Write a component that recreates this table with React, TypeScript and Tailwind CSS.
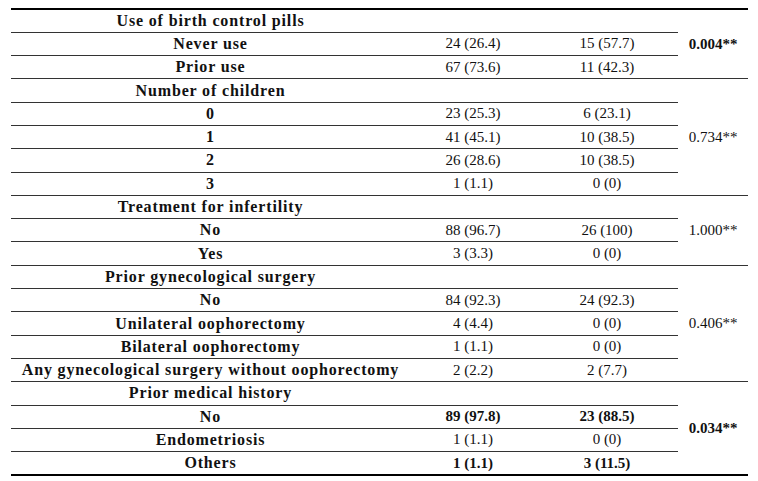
import React from "react";

type Row = { label: string; a?: string; b?: string; bold?: boolean };
type Group = { title: string; p: string; pBold?: boolean; rows: Row[] };

const groups: Group[] = [
  {
    title: "Use of birth control pills",
    p: "0.004**",
    pBold: true,
    rows: [
      { label: "Never use", a: "24 (26.4)", b: "15 (57.7)" },
      { label: "Prior use", a: "67 (73.6)", b: "11 (42.3)" },
    ],
  },
  {
    title: "Number of children",
    p: "0.734**",
    rows: [
      { label: "0", a: "23 (25.3)", b: "6 (23.1)" },
      { label: "1", a: "41 (45.1)", b: "10 (38.5)" },
      { label: "2", a: "26 (28.6)", b: "10 (38.5)" },
      { label: "3", a: "1 (1.1)", b: "0 (0)" },
    ],
  },
  {
    title: "Treatment for infertility",
    p: "1.000**",
    rows: [
      { label: "No", a: "88 (96.7)", b: "26 (100)" },
      { label: "Yes", a: "3 (3.3)", b: "0 (0)" },
    ],
  },
  {
    title: "Prior gynecological surgery",
    p: "0.406**",
    rows: [
      { label: "No", a: "84 (92.3)", b: "24 (92.3)" },
      { label: "Unilateral oophorectomy", a: "4 (4.4)", b: "0 (0)" },
      { label: "Bilateral oophorectomy", a: "1 (1.1)", b: "0 (0)" },
      { label: "Any gynecological surgery without oophorectomy", a: "2 (2.2)", b: "2 (7.7)" },
    ],
  },
  {
    title: "Prior medical history",
    p: "0.034**",
    pBold: true,
    rows: [
      { label: "No", a: "89 (97.8)", b: "23 (88.5)", bold: true },
      { label: "Endometriosis", a: "1 (1.1)", b: "0 (0)" },
      { label: "Others", a: "1 (1.1)", b: "3 (11.5)", bold: true },
    ],
  },
];

const cell = "h-[23.3px] p-0 text-center align-middle border-b border-[#333333]";
const label = "text-[16px] font-bold tracking-[0.85px]";

export default function App() {
  return (
    <div className="w-[758px] h-[481px] bg-white pt-2 pl-[11px] font-['Liberation_Serif',serif] text-[15px] leading-none text-[#111]">
      <table className="w-[737px] table-fixed border-collapse border-t-2 border-b-2 border-t-black border-b-black">
        <colgroup>
          <col className="w-[399px]" />
          <col className="w-[126px]" />
          <col className="w-[142px]" />
          <col className="w-[70px]" />
        </colgroup>
        <tbody>
          {groups.map((g, gi) => (
            <React.Fragment key={gi}>
              <tr>
                <td className={`${cell} ${label}`}>{g.title}</td>
                <td className={cell}></td>
                <td className={cell}></td>
                <td
                  rowSpan={g.rows.length + 1}
                  className={`p-0 text-center align-middle border-b border-[#333333] ${g.pBold ? "font-bold" : ""}`}
                >
                  {g.p}
                </td>
              </tr>
              {g.rows.map((r, ri) => (
                <tr key={ri}>
                  <td className={`${cell} ${label}`}>{r.label}</td>
                  <td className={`${cell} ${r.bold ? "font-bold" : ""}`}>{r.a}</td>
                  <td className={`${cell} ${r.bold ? "font-bold" : ""}`}>{r.b}</td>
                </tr>
              ))}
            </React.Fragment>
          ))}
        </tbody>
      </table>
    </div>
  );
}
